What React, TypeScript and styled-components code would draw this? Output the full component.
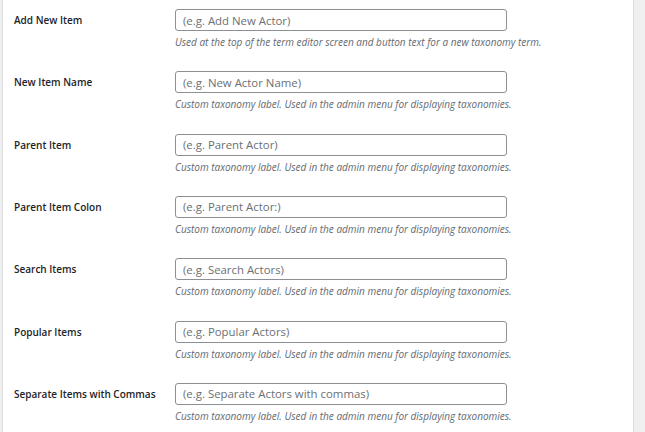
import * as React from 'react'
import styled, { createGlobalStyle } from 'styled-components'

const GlobalStyle = createGlobalStyle`
  html, body {
    margin: 0;
    padding: 0;
    background: #f0f0f1;
  }
  body {
    font-family: 'Segoe UI', 'Open Sans', 'Noto Sans', sans-serif;
    color: #1d2327;
  }
`

const Page = styled.div`
  display: flex;
  height: 432px;
  overflow: hidden;
  padding-left: 2px;
`

const Panel = styled.div`
  width: 632px;
  background: #fff;
  border-left: 1px solid #dcdcde;
  border-right: 1px solid #dcdcde;
  box-sizing: border-box;
  padding-left: 11px;
`

const Row = styled.div`
  display: grid;
  grid-template-columns: 161px 1fr;
  height: 62.33px;
  padding-top: 9px;
  box-sizing: border-box;
`

const Label = styled.label`
  font-size: 10px;
  font-weight: 600;
  line-height: 22px;
  white-space: nowrap;
  color: #1d2327;
`

const Field = styled.div`
  display: flex;
  flex-direction: column;
  gap: 4px;
`

const Input = styled.input`
  width: 332px;
  height: 22px;
  box-sizing: border-box;
  border: 1px solid #8c8f94;
  border-radius: 3px;
  padding: 0 7px;
  font-family: inherit;
  font-size: 11.4px;
  color: #2c3338;
  background: #fff;
  outline: none;

  &::placeholder {
    color: #6b6f74;
  }
`

const Description = styled.p`
  margin: 0;
  font-size: 10px;
  font-style: italic;
  line-height: 15px;
  color: #646970;
`

const generic = 'Custom taxonomy label. Used in the admin menu for displaying taxonomies.'

const fields = [
  {
    label: 'Add New Item',
    placeholder: '(e.g. Add New Actor)',
    description: 'Used at the top of the term editor screen and button text for a new taxonomy term.',
  },
  { label: 'New Item Name', placeholder: '(e.g. New Actor Name)', description: generic },
  { label: 'Parent Item', placeholder: '(e.g. Parent Actor)', description: generic },
  { label: 'Parent Item Colon', placeholder: '(e.g. Parent Actor:)', description: generic },
  { label: 'Search Items', placeholder: '(e.g. Search Actors)', description: generic },
  { label: 'Popular Items', placeholder: '(e.g. Popular Actors)', description: generic },
  {
    label: 'Separate Items with Commas',
    placeholder: '(e.g. Separate Actors with commas)',
    description: generic,
  },
]

export default function App() {
  return (
    <>
      <GlobalStyle />
      <Page>
        <Panel>
          {fields.map(f => (
            <Row key={f.label}>
              <Label>{f.label}</Label>
              <Field>
                <Input type="text" placeholder={f.placeholder} />
                <Description>{f.description}</Description>
              </Field>
            </Row>
          ))}
        </Panel>
      </Page>
    </>
  )
}
